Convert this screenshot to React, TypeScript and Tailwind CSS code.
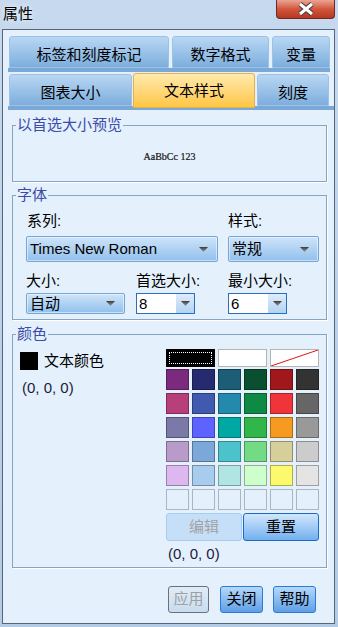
import React from 'react';

const SWATCHES = [
  ['#7B2A7D', '#262A6E', '#1C5E76', '#0A5030', '#A0171C', '#333333'],
  ['#B8407A', '#3F5AAE', '#248AAD', '#0E8A44', '#F0353A', '#666666'],
  ['#7A79A8', '#5E62FF', '#00A8A3', '#31B64A', '#F79A20', '#999999'],
  ['#B89BC8', '#7BA8D8', '#4CC3CA', '#72DB84', '#D5CF9A', '#CCCCCC'],
  ['#DDB8F0', '#A8CCEE', '#B0E5E3', '#CCFFCC', '#FCF96E', '#E4E4E4'],
];

const Arrow = () => (
  <svg width="9" height="5" viewBox="0 0 9 5">
    <defs>
      <linearGradient id="ar" x1="0" y1="0" x2="0" y2="1">
        <stop offset="0" stopColor="#3a3a3a" />
        <stop offset="1" stopColor="#9a9a9a" />
      </linearGradient>
    </defs>
    <polygon points="0,0 9,0 4.5,5" fill="url(#ar)" />
  </svg>
);

const Tab = ({ label, className, active }: { label: string; className: string; active?: boolean }) => (
  <div
    className={`flex justify-center rounded-t-[3px] border text-[15px] leading-[18px] text-black ${
      active
        ? 'relative z-10 -mb-[2px] items-center border-[#E4B04A] bg-gradient-to-b from-[#FFEAAA] to-[#FFC640]'
        : 'items-center pt-[6px] border-[#9EC2E6] bg-gradient-to-b from-[#B9D7F3] to-[#7DAEDD]'
    } ${className}`}
  >
    {label}
  </div>
);

const Select = ({ label, className }: { label: string; className: string }) => (
  <div
    className={`flex items-center justify-between rounded-[2px] border border-[#74A6DA] bg-gradient-to-b from-[#CFE4F9] to-[#91C0EC] pl-[3px] pr-[9px] shadow-[inset_0_0_0_1px_rgba(255,255,255,0.5)] ${className}`}
  >
    <span className="text-[15px] leading-[18px] text-black">{label}</span>
    <Arrow />
  </div>
);

const Combo = ({ value }: { value: string }) => (
  <div className="flex h-[21px] w-[59px] border border-[#2A6EBE]">
    <div className="w-[39px] bg-white pl-[2px] text-[15px] leading-[19px] text-black">{value}</div>
    <div className="flex flex-1 items-center justify-center bg-gradient-to-b from-[#DDECFB] to-[#B2D3F2]">
      <Arrow />
    </div>
  </div>
);

const Legend = ({ children }: { children: React.ReactNode }) => (
  <legend className="ml-[3px] px-[1px] text-[15px] leading-[16px] text-[#3C4CA8]">{children}</legend>
);

export default function App() {
  return (
    <div
      className="flex h-[627px] w-[338px] flex-col overflow-hidden bg-gradient-to-b from-[#C6D9EE] to-[#B4CBE5]"
      style={{ fontFamily: '"Liberation Sans", "Noto Sans CJK SC", sans-serif' }}
    >
      {/* title bar */}
      <div className="flex h-[29px] items-start">
        <div className="pl-[3px] pt-[5px] text-[15px] leading-[18px] text-black [text-shadow:0_0_6px_#fff]">属性</div>
        <div className="ml-auto mr-[3px] flex h-[19px] w-[59px] items-center justify-center rounded-b-[4px] border border-t-0 border-[#6E2A22] bg-gradient-to-b from-[#E9A592] via-[#D2553E] to-[#B5381F]">
          <svg width="18" height="14" viewBox="0 0 18 14">
            <path d="M3 2 L15 12 M15 2 L3 12" stroke="#3c3c3c" strokeWidth="5" />
            <path d="M3 2 L15 12 M15 2 L3 12" stroke="#fff" strokeWidth="3" />
          </svg>
        </div>
      </div>

      {/* client area */}
      <div className="ml-[2px] mr-[3px] flex h-[595px] flex-col border border-[#56667A] bg-[#E4F0FC]">
        {/* tabs */}
        <div className="pl-[5px] pt-[6px]">
          <div className="flex w-[322px] gap-[3px] pl-[1px]">
            <Tab label="标签和刻度标记" className="h-[32px] w-[160px]" />
            <Tab label="数字格式" className="h-[32px] w-[97px]" />
            <Tab label="变量" className="h-[32px] w-[58px]" />
          </div>
          <div className="h-[4px] w-[322px] bg-[#7AA9D8]" />
          <div className="mt-[1px] flex h-[33px] items-end pl-[1px]">
            <Tab label="图表大小" className="h-[32px] w-[123px]" />
            <Tab label="文本样式" className="ml-[1px] h-[35px] w-[122px]" active />
            <Tab label="刻度" className="ml-[2px] h-[32px] w-[72px]" />
          </div>
          <div className="h-[4px] bg-[#7AA9D8]" />
        </div>

        <div className="ml-[9px] mr-[7px] flex flex-col">
          {/* preview */}
          <fieldset className="mt-[7px] h-[65px] border border-[#86A4C4] shadow-[1px_1px_0_#fff]">
            <Legend>以首选大小预览</Legend>
            <div className="flex h-[48px] items-center justify-center">
              <span
                className="text-[10px] leading-[12px] text-[#141414] [-webkit-text-stroke:0.2px_#141414]"
                style={{ fontFamily: '"Liberation Serif", serif' }}
              >
                AaBbCc 123
              </span>
            </div>
          </fieldset>

          {/* font */}
          <fieldset className="mt-[5px] h-[133px] border border-[#86A4C4] shadow-[1px_1px_0_#fff]">
            <Legend>字体</Legend>
            <div className="pl-[13px] pt-[9px]">
              <div className="flex">
                <div className="w-[192px]">
                  <div className="pl-[1px] text-[15px] leading-[18px] text-black">系列:</div>
                  <Select label="Times New Roman" className="mt-[6px] h-[26px] w-[192px]" />
                </div>
                <div className="ml-[10px] w-[91px]">
                  <div className="text-[15px] leading-[18px] text-black">样式:</div>
                  <Select label="常规" className="mt-[6px] h-[26px] w-[91px]" />
                </div>
              </div>
              <div className="mt-[10px] flex">
                <div className="w-[99px]">
                  <div className="text-[15px] leading-[18px] text-black">大小:</div>
                  <Select label="自动" className="mt-[3px] h-[21px] w-[99px]" />
                </div>
                <div className="ml-[11px] w-[59px]">
                  <div className="whitespace-nowrap text-[15px] leading-[18px] text-black">首选大小:</div>
                  <div className="mt-[3px]">
                    <Combo value="8" />
                  </div>
                </div>
                <div className="ml-[33px] w-[59px]">
                  <div className="whitespace-nowrap text-[15px] leading-[18px] text-black">最小大小:</div>
                  <div className="mt-[3px]">
                    <Combo value="6" />
                  </div>
                </div>
              </div>
            </div>
          </fieldset>

          {/* colour */}
          <fieldset className="mt-[6px] h-[242px] border border-[#86A4C4] shadow-[1px_1px_0_#fff]">
            <Legend>颜色</Legend>
            <div className="flex">
              <div className="flex-1 pl-[7px]">
                <div className="mt-[10px] flex items-center">
                  <div className="h-[18px] w-[18px] bg-black" />
                  <span className="ml-[6px] text-[15px] leading-[18px] text-black">文本颜色</span>
                </div>
                <div className="mt-[9px] pl-[2px] text-[15px] leading-[18px] text-[#1C1C3C]">(0, 0, 0)</div>
              </div>
              <div className="mr-[7px] mt-[7px] w-[153px]">
                <div className="flex gap-[3px]">
                  <div className="flex h-[18px] w-[49px] bg-black p-[3px]">
                    <div className="flex-1 border border-dotted border-white" />
                  </div>
                  <div className="h-[18px] w-[49px] border border-[#B4B4B4] bg-white" />
                  <div className="h-[18px] w-[49px] border border-[#B4B4B4] bg-white">
                    <svg className="h-full w-full" viewBox="0 0 47 16" preserveAspectRatio="none">
                      <line x1="0" y1="16" x2="47" y2="0" stroke="#E81010" strokeWidth="1" />
                    </svg>
                  </div>
                </div>
                <div className="mt-[2px] flex flex-col gap-[3px]">
                  {SWATCHES.map((row, i) => (
                    <div key={i} className="flex gap-[3px]">
                      {row.map((c) => (
                        <div
                          key={c}
                          className="h-[21px] w-[23px] border border-black/30"
                          style={{ backgroundColor: c }}
                        />
                      ))}
                    </div>
                  ))}
                  <div className="flex gap-[3px]">
                    {[0, 1, 2, 3, 4, 5].map((k) => (
                      <div key={k} className="h-[21px] w-[23px] border border-[#A9B6C4]" />
                    ))}
                  </div>
                </div>
                <div className="mt-[3px] flex gap-[1px]">
                  <div className="flex h-[28px] w-[76px] items-center justify-center rounded-[3px] border border-[#A6CCF2] bg-[#C6DFF8] text-[15px] text-[#A2A2A2]">
                    编辑
                  </div>
                  <div className="flex h-[28px] w-[76px] items-center justify-center rounded-[3px] border border-[#1A6ACA] bg-gradient-to-b from-[#D2E7FC] to-[#72B0EE] text-[15px] text-black">
                    重置
                  </div>
                </div>
                <div className="mt-[4px] pl-[2px] text-[15px] leading-[18px] text-[#1C1C3C]">(0, 0, 0)</div>
              </div>
            </div>
          </fieldset>

          {/* dialog buttons */}
          <div className="mt-[18px] flex justify-end pr-[11px]">
            <div className="flex h-[27px] w-[41px] items-center justify-center rounded-[3px] border border-[#707070] bg-gradient-to-b from-[#E0ECF8] to-[#C8DCF0] text-[15px] text-[#A0A0A0]">
              应用
            </div>
            <div className="ml-[11px] flex h-[27px] w-[43px] items-center justify-center rounded-[3px] border border-[#2B7BD6] bg-gradient-to-b from-[#B4D8FA] to-[#5E9FE6] text-[15px] text-black">
              关闭
            </div>
            <div className="ml-[10px] flex h-[27px] w-[43px] items-center justify-center rounded-[3px] border border-[#2B7BD6] bg-gradient-to-b from-[#B4D8FA] to-[#5E9FE6] text-[15px] text-black">
              帮助
            </div>
          </div>
        </div>
      </div>
    </div>
  );
}
